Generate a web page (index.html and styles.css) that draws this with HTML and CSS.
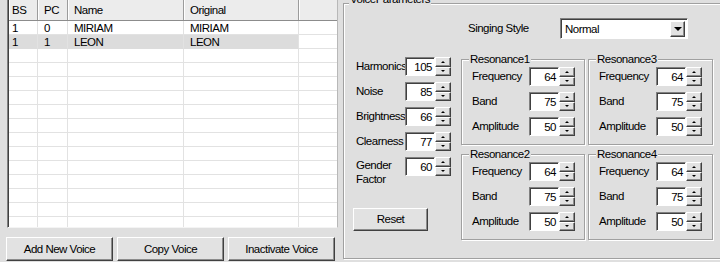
FILE: index.html
```html
<!DOCTYPE html>
<html lang="en">
<head>
    <meta charset="UTF-8">
    <meta name="viewport" content="width=device-width, initial-scale=1.0">
    <title>Voice Editor</title>
    <link rel="stylesheet" href="styles.css">
</head>
<body>
    <div class="window">
        <div class="voices">
            <div class="list">
                <div class="list-head">
                    <div class="hcell first">BS</div>
                    <div class="hcell">PC</div>
                    <div class="hcell">Name</div>
                    <div class="hcell">Original</div>
                    <div class="hcell filler"></div>
                </div>
                <div class="list-body">
                    <div class="row">
                        <div class="cell first">1</div>
                        <div class="cell">0</div>
                        <div class="cell">MIRIAM</div>
                        <div class="cell">MIRIAM</div>
                        <div class="cell filler"></div>
                    </div>
                    <div class="row selected">
                        <div class="cell first">1</div>
                        <div class="cell">1</div>
                        <div class="cell">LEON</div>
                        <div class="cell">LEON</div>
                        <div class="cell filler"></div>
                    </div>
                    <div class="row"><div class="cell"></div><div class="cell"></div><div class="cell"></div><div class="cell"></div><div class="cell filler"></div></div>
                    <div class="row"><div class="cell"></div><div class="cell"></div><div class="cell"></div><div class="cell"></div><div class="cell filler"></div></div>
                    <div class="row"><div class="cell"></div><div class="cell"></div><div class="cell"></div><div class="cell"></div><div class="cell filler"></div></div>
                    <div class="row"><div class="cell"></div><div class="cell"></div><div class="cell"></div><div class="cell"></div><div class="cell filler"></div></div>
                    <div class="row"><div class="cell"></div><div class="cell"></div><div class="cell"></div><div class="cell"></div><div class="cell filler"></div></div>
                    <div class="row"><div class="cell"></div><div class="cell"></div><div class="cell"></div><div class="cell"></div><div class="cell filler"></div></div>
                    <div class="row"><div class="cell"></div><div class="cell"></div><div class="cell"></div><div class="cell"></div><div class="cell filler"></div></div>
                    <div class="row"><div class="cell"></div><div class="cell"></div><div class="cell"></div><div class="cell"></div><div class="cell filler"></div></div>
                    <div class="row"><div class="cell"></div><div class="cell"></div><div class="cell"></div><div class="cell"></div><div class="cell filler"></div></div>
                    <div class="row"><div class="cell"></div><div class="cell"></div><div class="cell"></div><div class="cell"></div><div class="cell filler"></div></div>
                    <div class="row"><div class="cell"></div><div class="cell"></div><div class="cell"></div><div class="cell"></div><div class="cell filler"></div></div>
                    <div class="row"><div class="cell"></div><div class="cell"></div><div class="cell"></div><div class="cell"></div><div class="cell filler"></div></div>
                    <div class="row"><div class="cell"></div><div class="cell"></div><div class="cell"></div><div class="cell"></div><div class="cell filler"></div></div>
                </div>
            </div>
            <div class="voice-buttons">
                <button class="btn wide">Add New Voice</button>
                <button class="btn wide">Copy Voice</button>
                <button class="btn wide">Inactivate Voice</button>
            </div>
        </div>

        <div class="params">
            <div class="group main">
                <span class="group-title">VoiceParameters</span>

                <div class="style-row">
                    <span class="style-label">Singing Style</span>
                    <div class="combo">
                        <span class="combo-text">Normal</span>
                        <span class="combo-arrow"></span>
                    </div>
                </div>

                <div class="main-body">
                    <div class="basic">
                        <div class="basic-grid">
                            <span class="plabel">Harmonics</span>
                            <span class="edit">105</span>
                            <span class="spin"><i class="up"></i><i class="down"></i></span>

                            <span class="plabel">Noise</span>
                            <span class="edit">85</span>
                            <span class="spin"><i class="up"></i><i class="down"></i></span>

                            <span class="plabel">Brightness</span>
                            <span class="edit">66</span>
                            <span class="spin"><i class="up"></i><i class="down"></i></span>

                            <span class="plabel">Clearness</span>
                            <span class="edit">77</span>
                            <span class="spin"><i class="up"></i><i class="down"></i></span>

                            <span class="plabel two-line">Gender<br>Factor</span>
                            <span class="edit">60</span>
                            <span class="spin"><i class="up"></i><i class="down"></i></span>
                        </div>
                        <button class="btn reset">Reset</button>
                    </div>

                    <div class="res-grid">
                        <div class="group res">
                            <span class="group-title">Resonance1</span>
                            <div class="res-body">
                                <span class="plabel">Frequency</span><span class="edit">64</span><span class="spin"><i class="up"></i><i class="down"></i></span>
                                <span class="plabel">Band</span><span class="edit">75</span><span class="spin"><i class="up"></i><i class="down"></i></span>
                                <span class="plabel">Amplitude</span><span class="edit">50</span><span class="spin"><i class="up"></i><i class="down"></i></span>
                            </div>
                        </div>
                        <div class="group res">
                            <span class="group-title">Resonance3</span>
                            <div class="res-body">
                                <span class="plabel">Frequency</span><span class="edit">64</span><span class="spin"><i class="up"></i><i class="down"></i></span>
                                <span class="plabel">Band</span><span class="edit">75</span><span class="spin"><i class="up"></i><i class="down"></i></span>
                                <span class="plabel">Amplitude</span><span class="edit">50</span><span class="spin"><i class="up"></i><i class="down"></i></span>
                            </div>
                        </div>
                        <div class="group res">
                            <span class="group-title">Resonance2</span>
                            <div class="res-body">
                                <span class="plabel">Frequency</span><span class="edit">64</span><span class="spin"><i class="up"></i><i class="down"></i></span>
                                <span class="plabel">Band</span><span class="edit">75</span><span class="spin"><i class="up"></i><i class="down"></i></span>
                                <span class="plabel">Amplitude</span><span class="edit">50</span><span class="spin"><i class="up"></i><i class="down"></i></span>
                            </div>
                        </div>
                        <div class="group res">
                            <span class="group-title">Resonance4</span>
                            <div class="res-body">
                                <span class="plabel">Frequency</span><span class="edit">64</span><span class="spin"><i class="up"></i><i class="down"></i></span>
                                <span class="plabel">Band</span><span class="edit">75</span><span class="spin"><i class="up"></i><i class="down"></i></span>
                                <span class="plabel">Amplitude</span><span class="edit">50</span><span class="spin"><i class="up"></i><i class="down"></i></span>
                            </div>
                        </div>
                    </div>
                </div>
            </div>
        </div>
    </div>
</body>
</html>
```

FILE: styles.css
```css
body {
    margin: 0;
    width: 720px;
    height: 262px;
    overflow: hidden;
    background-color: #dfdfdf;
    color: #000;
    font-family: "Liberation Sans", Arial, sans-serif;
    font-size: 11.5px;
    letter-spacing: -0.5px;
    line-height: 13px;
}

.window {
    display: flex;
    height: 262px;
}

/* voice list */

.voices {
    width: 343px;
    flex: none;
}

.list {
    margin-left: 7px;
    width: 331px;
    height: 228px;
    box-sizing: border-box;
    background-color: #fff;
    border-left: 1px solid #808080;
    border-right: 1px solid #b8b8b8;
    border-bottom: 1px solid #f4f4f4;
    box-shadow: inset 1px 0 #404040;
    padding-left: 1px;
    overflow: hidden;
}

.list-head,
.row {
    display: grid;
    grid-template-columns: 29px 30px 116px 115px 1fr;
}

.list-head {
    height: 21px;
    box-sizing: border-box;
    background-color: #ececec;
    border-bottom: 1px solid #8c8c8c;
}

.hcell {
    padding-left: 6px;
    line-height: 20px;
    border-right: 1px solid #9c9c9c;
    box-shadow: inset 1px 0 #fff;
}

.hcell.first,
.cell.first {
    padding-left: 3px;
}

.hcell.filler {
    border-right: none;
}

.row {
    height: 14px;
}

.cell {
    height: 14px;
    box-sizing: border-box;
    padding-left: 6px;
    line-height: 14px;
    border-right: 1px solid #e2e2e2;
    border-bottom: 1px solid #e2e2e2;
}

.cell.filler {
    border-right: none;
}

.row.selected .cell {
    background-color: #dcdcdc;
    border-bottom-color: #dcdcdc;
}

.row.selected .cell.filler {
    background-color: #fff;
    border-bottom-color: #e2e2e2;
}

.voice-buttons {
    display: flex;
    gap: 4px;
    padding-left: 6px;
    margin-top: 9px;
}

/* buttons and controls */

.btn {
    font: inherit;
    letter-spacing: inherit;
    color: #000;
    background-color: #e2e2e2;
    border: 1px solid;
    border-color: #fff #404040 #404040 #fff;
    box-shadow: inset -1px -1px #8c8c8c;
    padding: 0;
    height: 24px;
}

.btn.wide {
    width: 107px;
}

.btn.reset {
    width: 75px;
    height: 23px;
    margin-top: 32px;
}

.edit {
    width: 30px;
    height: 19px;
    box-sizing: border-box;
    background-color: #fff;
    border: 1px solid;
    border-color: #808080 #fff #fff #808080;
    box-shadow: inset 1px 1px #404040;
    text-align: right;
    padding-right: 2px;
    padding-top: 3px;
}

.spin {
    width: 16px;
    height: 19px;
    display: flex;
    flex-direction: column;
}

.spin i {
    flex: 1;
    box-sizing: border-box;
    background-color: #e2e2e2;
    border: 1px solid;
    border-color: #fff #404040 #404040 #fff;
    box-shadow: inset -1px -1px #8c8c8c;
    display: flex;
    align-items: center;
    justify-content: center;
}

.spin i::after {
    content: "";
    border-left: 2px solid transparent;
    border-right: 2px solid transparent;
}

.spin .up::after {
    border-bottom: 2px solid #000;
}

.spin .down::after {
    border-top: 2px solid #000;
}

/* group boxes */

.params {
    flex: 1;
    min-width: 0;
    padding-top: 3px;
    overflow: hidden;
}

.group {
    position: relative;
    box-sizing: border-box;
    border: 1px solid #a0a0a0;
    box-shadow: inset 1px 1px #fff, 1px 1px #fff;
}

.group-title {
    position: absolute;
    top: -7px;
    left: 7px;
    padding: 0 1px;
    background-color: #dfdfdf;
    white-space: nowrap;
}

.group.main {
    width: 392px;
    height: 256px;
}

.group.main > .group-title {
    top: -11px;
    left: 5px;
}

.style-row {
    display: flex;
    align-items: center;
    margin-top: 14px;
    padding-left: 124px;
}

.style-label {
    width: 92px;
}

.combo {
    width: 128px;
    height: 21px;
    box-sizing: border-box;
    background-color: #fff;
    border: 1px solid;
    border-color: #808080 #fff #fff #808080;
    box-shadow: inset 1px 1px #404040;
    display: flex;
    align-items: center;
    justify-content: space-between;
    padding: 2px 2px 1px 4px;
}

.combo-arrow {
    width: 15px;
    height: 16px;
    box-sizing: border-box;
    background-color: #e2e2e2;
    border: 1px solid;
    border-color: #fff #404040 #404040 #fff;
    box-shadow: inset -1px -1px #8c8c8c;
    display: flex;
    align-items: center;
    justify-content: center;
}

.combo-arrow::after {
    content: "";
    border-left: 4px solid transparent;
    border-right: 4px solid transparent;
    border-top: 4px solid #000;
}

.main-body {
    display: flex;
    margin-top: 18px;
}

.basic {
    width: 117px;
    box-sizing: border-box;
    padding-left: 9px;
    flex: none;
}

.basic-grid {
    display: grid;
    grid-template-columns: 52px 30px 16px;
    grid-auto-rows: 19px;
    row-gap: 6px;
    align-items: center;
}

.plabel {
    padding-left: 3px;
    white-space: nowrap;
}

.basic-grid .two-line {
    align-self: start;
    line-height: 14px;
    padding-top: 1px;
}

.res-grid {
    display: grid;
    grid-template-columns: 124px 125px;
    grid-template-rows: 86px 86px;
    column-gap: 3px;
    row-gap: 9px;
    margin-top: 2px;
}

.res-body {
    display: grid;
    grid-template-columns: 60px 30px 16px;
    grid-auto-rows: 19px;
    row-gap: 6px;
    align-items: center;
    padding: 7px 0 0 7px;
}
```
